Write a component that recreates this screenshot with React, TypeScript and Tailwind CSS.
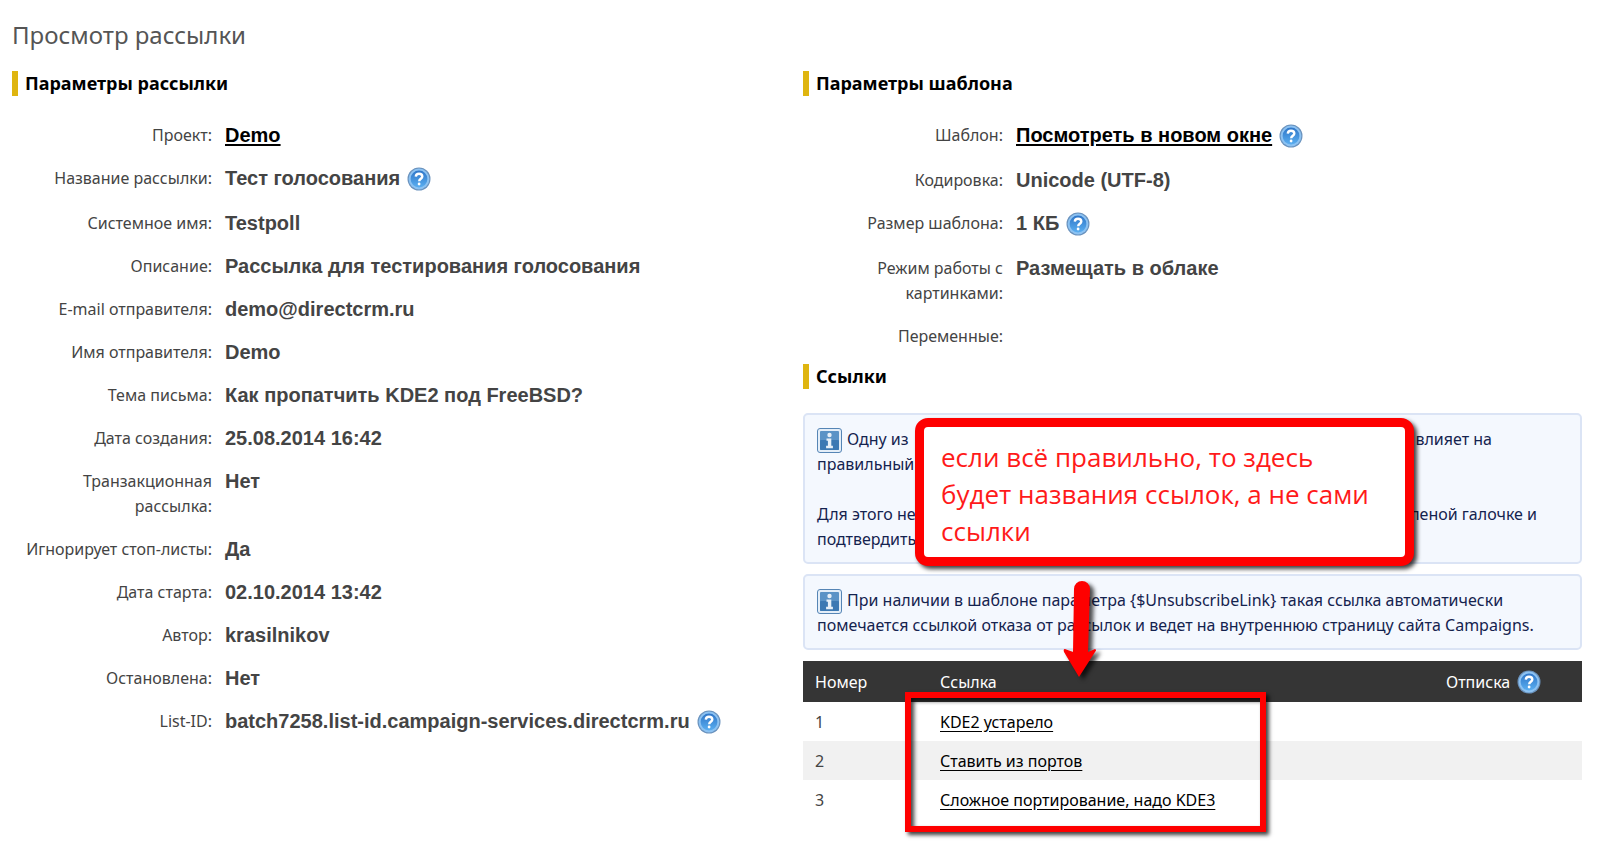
import type { ReactNode } from "react";

type Field = {
  label: string;
  value?: string;
  href?: string;
  help?: boolean;
};

const mailing: Field[] = [
  { label: "Проект:", value: "Demo", href: "#demo" },
  { label: "Название рассылки:", value: "Тест голосования", help: true },
  { label: "Системное имя:", value: "Testpoll" },
  { label: "Описание:", value: "Рассылка для тестирования голосования" },
  { label: "E-mail отправителя:", value: "demo@directcrm.ru" },
  { label: "Имя отправителя:", value: "Demo" },
  { label: "Тема письма:", value: "Как пропатчить KDE2 под FreeBSD?" },
  { label: "Дата создания:", value: "25.08.2014 16:42" },
  { label: "Транзакционная рассылка:", value: "Нет" },
  { label: "Игнорирует стоп-листы:", value: "Да" },
  { label: "Дата старта:", value: "02.10.2014 13:42" },
  { label: "Автор:", value: "krasilnikov" },
  { label: "Остановлена:", value: "Нет" },
  { label: "List-ID:", value: "batch7258.list-id.campaign-services.directcrm.ru", help: true },
];

const template: Field[] = [
  { label: "Шаблон:", value: "Посмотреть в новом окне", href: "#template", help: true },
  { label: "Кодировка:", value: "Unicode (UTF-8)" },
  { label: "Размер шаблона:", value: "1 КБ", help: true },
  { label: "Режим работы с картинками:", value: "Размещать в облаке" },
  { label: "Переменные:" },
];

const links = ["KDE2 устарело", "Ставить из портов", "Сложное портирование, надо KDE3"];

const unsubscribeNote =
  "При наличии в шаблоне параметра {$UnsubscribeLink} такая ссылка автоматически помечается ссылкой отказа от рассылок и ведет на внутреннюю страницу сайта Campaigns.";

const HelpButton = () => (
  <button type="button" aria-label="Справка" className="block h-6 w-6 shrink-0 cursor-pointer">
    <svg viewBox="0 0 24 24" className="h-6 w-6">
      <defs>
        <linearGradient id="help" x1="0" y1="0" x2="0" y2="1">
          <stop offset="0" stopColor="#2f76c8" />
          <stop offset="1" stopColor="#5aaef0" />
        </linearGradient>
      </defs>
      <circle cx="12" cy="12" r="11.5" fill="#6a92bd" />
      <circle cx="12" cy="12" r="10.4" fill="#8cc2f2" />
      <circle cx="12" cy="12" r="8.4" fill="url(#help)" />
      <path d="M8.8 9.6C8.9 7.7 10.2 6.8 12 6.8s3.3 1 3.3 2.7c0 2.2-3 2.3-3.1 4.7" fill="none" stroke="#fff" strokeWidth="2.4" />
      <circle cx="12.1" cy="17" r="1.4" fill="#fff" />
    </svg>
  </button>
);

const InfoIcon = () => (
  <svg viewBox="0 0 25 25" className="-my-1 mr-[5px] inline-block h-[25px] w-[25px] align-middle">
    <rect x="0.5" y="0.5" width="24" height="24" rx="2.5" fill="#e4eef8" stroke="#5585b5" />
    <rect x="3" y="3" width="19" height="19" rx="1" fill="#5b93c6" />
    <rect x="3" y="12" width="19" height="10" rx="1" fill="#3d79b3" />
    <circle cx="12.5" cy="7" r="2.2" fill="#e8f0f8" />
    <path d="M9.5 10.5h4.8v7.3h1.6v2.4H9.1v-2.4h1.8v-5H9.5z" fill="#e8f0f8" />
  </svg>
);

const Heading = ({ children }: { children: ReactNode }) => (
  <h2 className="h-[25px] border-l-6 border-[#dfb510] pl-[7px] text-[18px] leading-[25px] font-bold text-black">
    {children}
  </h2>
);

const Fields = ({ items }: { items: Field[] }) => (
  <dl className="mt-[27px] flex flex-col gap-[18px]">
    {items.map((item) => (
      <div key={item.label} className="flex gap-[13px]">
        <dt className="w-[200px] shrink-0 pl-2 text-right leading-[25px]">{item.label}</dt>
        <dd className="flex gap-[7px] font-['Liberation_Sans',sans-serif] text-[20px] leading-[25px] font-bold">
          {item.href ? (
            <a href={item.href} className="text-black underline decoration-2 underline-offset-2">{item.value}</a>
          ) : (
            <span>{item.value}</span>
          )}
          {item.help && <span className="h-[27px] pt-px"><HelpButton /></span>}
        </dd>
      </div>
    ))}
  </dl>
);

const InfoBox = ({ children }: { children: ReactNode }) => (
  <div className="rounded-[5px] border-2 border-[#dbe4f5] bg-[#f4f8fe] px-3 pt-3 pb-[10px] leading-[25px] text-[#14234f]">
    {children}
  </div>
);

const App = () => {
  return (
    <div className="min-h-screen bg-white pt-[19px] pr-[17px] pb-4 pl-3 font-['Noto_Sans',sans-serif] text-[16px] text-[#444]">
      <h1 className="text-[24px] leading-8 text-[#555]">Просмотр рассылки</h1>

      <div className="mt-5 grid grid-cols-2 gap-3">
        <section>
          <Heading>Параметры рассылки</Heading>
          <Fields items={mailing} />
        </section>

        <div>
          <section>
            <Heading>Параметры шаблона</Heading>
            <Fields items={template} />
          </section>

          <section className="relative mt-[15px]">
            <Heading>Ссылки</Heading>

            <div className="mt-6 flex flex-col gap-[10px]">
              <InfoBox>
                <p className="flex justify-between pr-[76px]">
                  <span><InfoIcon />Одну из</span>
                  <span>влияет на</span>
                </p>
                <p>правильный</p>
                <p className="mt-[25px] flex justify-between pr-[31px]">
                  <span>Для этого не</span>
                  <span>леной галочке и</span>
                </p>
                <p>подтвердить</p>
              </InfoBox>
              <InfoBox>
                <p><InfoIcon />{unsubscribeNote}</p>
              </InfoBox>
            </div>

            <table className="mt-[11px] w-full table-fixed text-left">
              <thead>
                <tr className="h-[41px] bg-[#353535] text-white">
                  <th className="w-[125px] pl-3 font-normal">Номер</th>
                  <th className="pl-3 font-normal">Ссылка</th>
                  <th className="w-[148px] pl-3 font-normal">
                    <span className="flex items-center gap-[7px]">Отписка <HelpButton /></span>
                  </th>
                </tr>
              </thead>
              <tbody>
                {links.map((link, i) => (
                  <tr key={link} className="h-[39px] even:bg-[#f1f1f1]">
                    <td className="pl-3">{i + 1}</td>
                    <td className="pl-3">
                      <a href="#link" className="text-black underline underline-offset-3">{link}</a>
                    </td>
                    <td></td>
                  </tr>
                ))}
              </tbody>
            </table>

            {/* callout, arrow and frame over the links */}
            <div className="absolute top-[54px] left-[112px] h-[148px] w-[499px] rounded-[13px] border-9 border-[#fe0000] bg-white px-[17px] py-[12px] font-['Open_Sans',sans-serif] text-[26px] leading-[37px] text-[#ff1a1a] shadow-[3px_3px_4px_rgba(0,0,0,0.75)]">
              если всё правильно, то здесь будет названия ссылок, а не сами ссылки
            </div>
            <svg viewBox="0 0 40 106" className="pointer-events-none absolute top-[214px] left-[258px] h-[106px] w-[40px] drop-shadow-[4px_3px_2px_rgba(0,0,0,0.7)]">
              <path d="M13 11a8 8 0 0 1 16 0L27 74l7-3q2 1 0 3L18 99 3 74q-1-3 1-3l8 3z" fill="#fe0000" />
            </svg>
            <div className="pointer-events-none absolute top-[328px] left-[102px] h-[140px] w-[361px] border-6 border-[#fe0000] shadow-[3px_3px_4px_rgba(0,0,0,0.75),inset_3px_3px_4px_rgba(0,0,0,0.75)]"></div>
          </section>
        </div>
      </div>
    </div>
  );
};

export default App;
